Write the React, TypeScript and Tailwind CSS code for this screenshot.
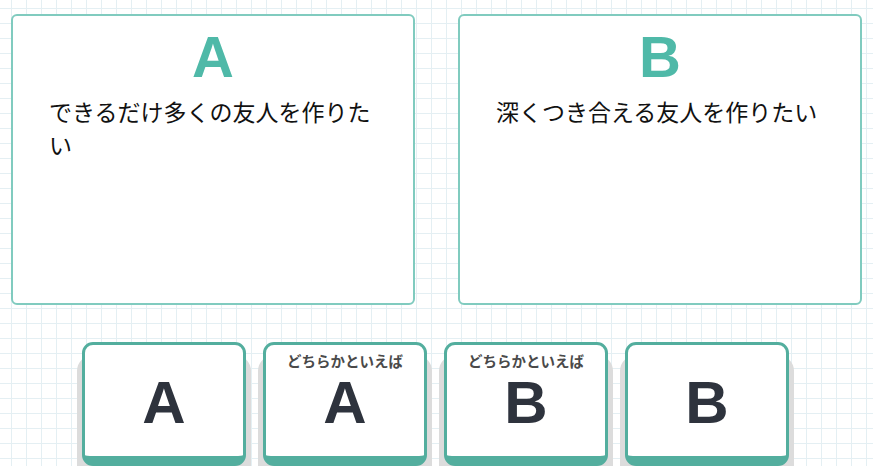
const options = [
  { key: "A", text: "できるだけ多くの友人を作りたい" },
  { key: "B", text: "深くつき合える友人を作りたい" },
];

const answers = [
  { letter: "A", hint: "" },
  { letter: "A", hint: "どちらかといえば" },
  { letter: "B", hint: "どちらかといえば" },
  { letter: "B", hint: "" },
];

const jp = "font-['Liberation_Sans','Noto_Sans_CJK_JP',sans-serif]";

export default function App() {
  return (
    <div
      className={`h-[466px] w-full overflow-hidden bg-white bg-[linear-gradient(to_right,#e4eff3_1px,transparent_1px),linear-gradient(to_bottom,#e4eff3_1px,transparent_1px)] bg-[size:15px_15px] bg-[position:11px_8px] ${jp}`}
    >
      <div className="flex gap-[43px] pl-[11px] pt-[14px]">
        {options.map((o) => (
          <div
            key={o.key}
            className="h-[291px] w-[404px] rounded-[6px] border-2 border-[#80cbbf] bg-white pt-[12px]"
          >
            <div className="text-center text-[58px] font-bold leading-none text-[#4fb9a8]">
              {o.key}
            </div>
            <p className="mt-[11px] px-[36px] text-[23px] leading-[33px] text-[#111]">
              {o.text}
            </p>
          </div>
        ))}
      </div>

      <div className="mt-[37px] flex justify-center gap-[17px] pr-[2px]">
        {answers.map((a, i) => (
          <button
            key={i}
            className="flex h-[124px] w-[164px] flex-col items-center rounded-[11px] border-[3px] border-b-[10px] border-[#53ae9e] bg-white shadow-[0_18px_0_5px_#dcdcdc]"
          >
            <span className="mt-[8px] h-[18px] text-[14.5px] font-bold leading-[18px] text-[#4a4a4a]">
              {a.hint}
            </span>
            <span className="mt-[2px] text-[60px] font-bold leading-none text-[#2e333d]">
              {a.letter}
            </span>
          </button>
        ))}
      </div>
    </div>
  );
}
